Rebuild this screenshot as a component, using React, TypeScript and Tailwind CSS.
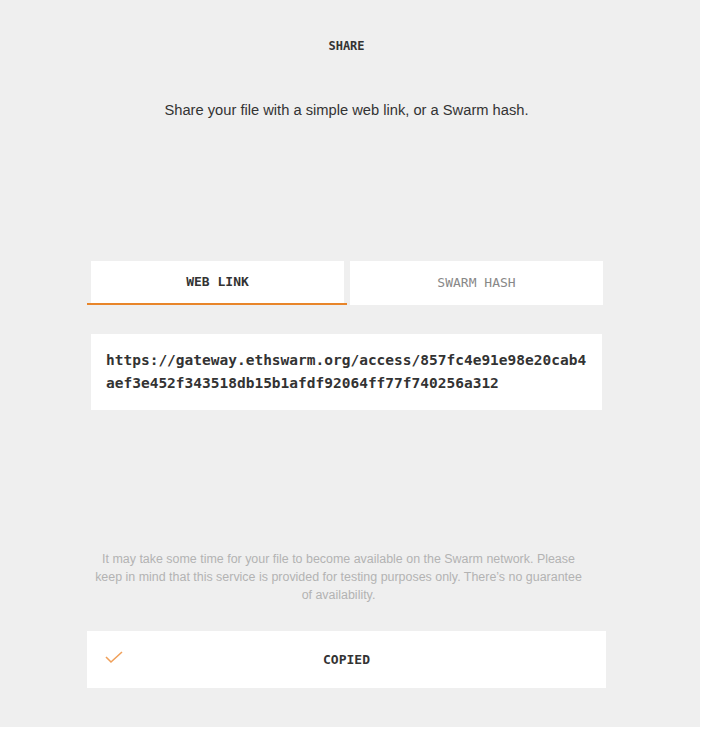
import React from "react";

export default function App() {
  const mono = { fontFamily: '"DejaVu Sans Mono", "Liberation Mono", monospace' };
  const sans = { fontFamily: '"Liberation Sans", Arial, sans-serif' };
  return (
    <div className="w-[705px] h-[733px] bg-white">
      <div className="w-[700px] h-[727px] bg-[#efefef] flex flex-col">
        <div className="w-[519px] ml-[87px] flex flex-col">
          <div
            className="mt-[38px] text-center text-[12px] leading-[16px] font-bold text-[#333]"
            style={mono}
          >
            SHARE
          </div>
          <div
            className="mt-[46px] text-center text-[14.7px] leading-[20px] text-[#333]"
            style={sans}
          >
            Share your file with a simple web link, or a Swarm hash.
          </div>

          <div className="mt-[141px] flex h-[44px]">
            <div className="w-[260px] flex flex-col">
              <div
                className="ml-[4px] mr-[3px] h-[42px] bg-white flex items-center justify-center text-[13px] font-bold text-[#333]"
                style={mono}
              >
                WEB LINK
              </div>
              <div className="h-[2px] bg-[#e8852a]" />
            </div>
            <div className="w-[259px] flex flex-col">
              <div
                className="ml-[3px] mr-[3px] h-[44px] bg-white flex items-center justify-center text-[13px] text-[#888]"
                style={mono}
              >
                SWARM HASH
              </div>
            </div>
          </div>

          <div
            className="mt-[29px] ml-[4px] mr-[4px] h-[76px] bg-white px-[15px] pt-[15px] text-[14.5px] leading-[23px] font-semibold text-[#333] break-all"
            style={mono}
          >
            https://gateway.ethswarm.org/access/857fc4e91e98e20cab4
            <br />
            aef3e452f343518db15b1afdf92064ff77f740256a312
          </div>

          <div
            className="mt-[140px] -ml-[20px] mr-[-4px] text-center text-[12.45px] leading-[18px] text-[#b3b3b3]"
            style={sans}
          >
            It may take some time for your file to become available on the Swarm network. Please
            <br />
            keep in mind that this service is provided for testing purposes only. There’s no guarantee
            <br />
            of availability.
          </div>

          <div className="mt-[27px] h-[57px] bg-white relative flex items-center justify-center">
            <svg
              className="absolute left-[18px] top-[20px]"
              width="18"
              height="13"
              viewBox="0 0 18 13"
              fill="none"
            >
              <polyline
                points="1,6 6,11 17,1"
                stroke="#f0a05a"
                strokeWidth="1.6"
                fill="none"
              />
            </svg>
            <span className="text-[13px] font-bold text-[#333]" style={mono}>
              COPIED
            </span>
          </div>
        </div>
      </div>
    </div>
  );
}
